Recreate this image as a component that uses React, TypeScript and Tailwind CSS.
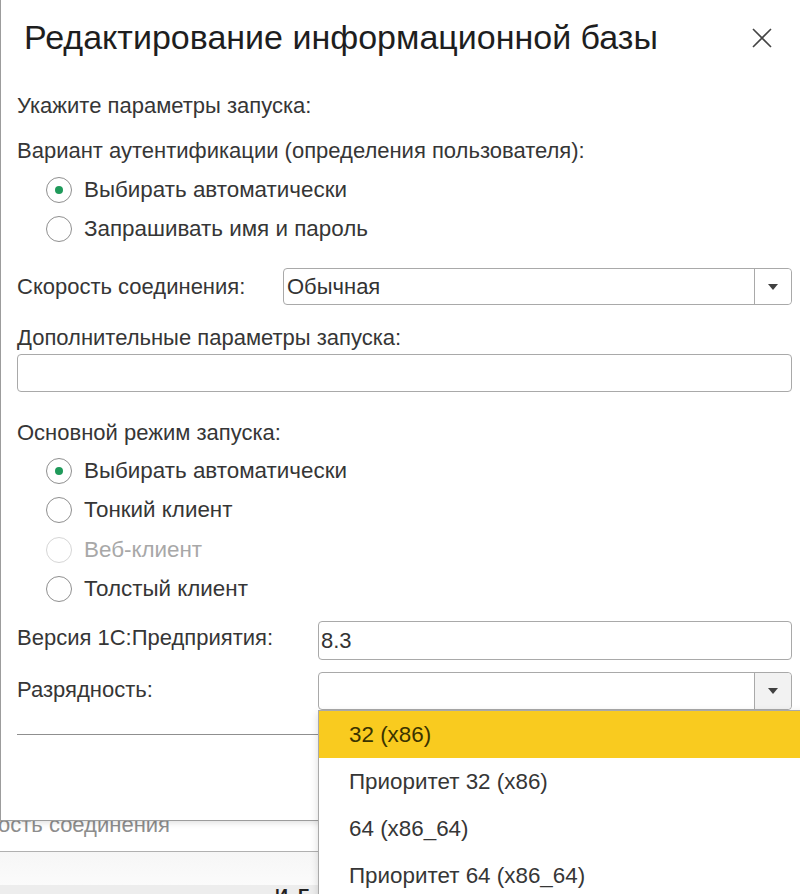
import React from "react";

const font = { fontFamily: '"Liberation Sans", Arial, sans-serif' };

function Radio({ label, checked = false, disabled = false }: { label: string; checked?: boolean; disabled?: boolean }) {
  return (
    <div className="flex h-[39.5px] items-center pl-[29px]">
      <div
        className={
          "flex h-[26px] w-[26px] items-center justify-center rounded-full border " +
          (disabled ? "border-[#d6d6d6]" : "border-[#8f8f8f]")
        }
      >
        {checked && <div className="h-[8px] w-[8px] rounded-full bg-[#1f9a5a]" />}
      </div>
      <span className={"ml-[12px] text-[22.4px] " + (disabled ? "text-[#a8a8a8]" : "text-[#363636]")}>{label}</span>
    </div>
  );
}

function Arrow() {
  return (
    <svg width="10" height="6" viewBox="0 0 10 6">
      <path d="M0 0 L10 0 L5 6 Z" fill="#404040" />
    </svg>
  );
}

function SelectBox({ value, hover = false, h }: { value: string; hover?: boolean; h: string }) {
  return (
    <div className={"flex flex-1 items-stretch rounded-[4px] border border-[#a9a9a9] bg-white " + h}>
      <div className="flex flex-1 items-center pl-[3px] text-[22px] text-[#333]">{value}</div>
      <div
        className={
          "flex w-[37px] items-center justify-center border-l border-[#a9a9a9] rounded-r-[4px] " +
          (hover ? "bg-[#f2f2f2]" : "bg-white")
        }
      >
        <Arrow />
      </div>
    </div>
  );
}

export default function App() {
  return (
    <div className="relative h-[894px] w-[800px] overflow-hidden bg-white" style={font}>
      {/* Dialog */}
      <div className="relative z-10 flex h-[821px] w-[800px] flex-col border-b border-l border-[#9c9c9c] bg-white pr-[8px] shadow-[0_2px_6px_rgba(0,0,0,0.12)]">
        <div className="flex h-[75px] items-center justify-between pl-[23px] pr-[14px]">
          <span className="text-[34px] text-[#1e1e1e]">Редактирование информационной базы</span>
          <svg width="22" height="22" viewBox="0 0 22 22" className="mr-[5px]">
            <path d="M2 2 L20 20 M20 2 L2 20" stroke="#444" strokeWidth="1.6" />
          </svg>
        </div>

        <div className="flex flex-col pl-[16px] text-[22px] text-[#363636]">
          <div className="mt-[10px] flex h-[40px] items-center">Укажите параметры запуска:</div>
          <div className="mt-[5px] flex h-[40px] items-center">Вариант аутентификации (определения пользователя):</div>
          <Radio label="Выбирать автоматически" checked />
          <Radio label="Запрашивать имя и пароль" />

          <div className="mt-[19px] flex items-center">
            <span className="w-[266px]">Скорость соединения:</span>
            <SelectBox value="Обычная" h="h-[37px]" />
          </div>

          <div className="mt-[19px] flex h-[26px] items-center">Дополнительные параметры запуска:</div>
          <div className="mt-[4px] h-[38px] rounded-[4px] border border-[#a9a9a9] bg-white" />

          <div className="mt-[27px] flex h-[26px] items-center">Основной режим запуска:</div>
          <div className="mt-[6px] flex flex-col">
            <Radio label="Выбирать автоматически" checked />
            <Radio label="Тонкий клиент" />
            <Radio label="Веб-клиент" disabled />
            <Radio label="Толстый клиент" />
          </div>

          <div className="mt-[12px] flex items-center">
            <span className="w-[301px] -mt-[6px]">Версия 1С:Предприятия:</span>
            <div className="flex h-[39px] flex-1 items-center rounded-[4px] border border-[#a9a9a9] bg-white pl-[2px] text-[#333]">
              8.3
            </div>
          </div>

          <div className="mt-[12px] flex items-center">
            <span className="w-[301px] -mt-[4px]">Разрядность:</span>
            <SelectBox value="" hover h="h-[38px]" />
          </div>

          <div className="mt-[24px] h-px bg-[#8f8f8f]" />
        </div>
      </div>

      {/* Background page below the dialog */}
      <div className="flex flex-col">
        <div className="h-[30px] overflow-hidden">
          <div className="-mt-[13px] -ml-[2px] text-[22px] text-[#8d8d8d]">ость соединения</div>
        </div>
        <div className="h-px bg-[#b0b0b0]" />
        <div className="h-[33px] bg-gradient-to-b from-[#f6f6f6] to-[#fbfbfb]" />
        <div className="flex h-[12px] items-start overflow-hidden bg-[#ededed] pl-[275px]">
          <span className="text-[18px] font-bold leading-[22px] text-[#222]">И. Б</span>
        </div>
      </div>

      {/* Dropdown list (overlay) */}
      <div className="absolute left-[318px] top-[710px] z-20 h-[200px] w-[500px] border-l border-t border-[#a9a9a9] bg-white text-[22.4px] text-[#363636] shadow-[0_3px_8px_rgba(0,0,0,0.15)]">
        <div className="flex h-[47px] items-center bg-[#f9cb1f] pl-[30px] text-[#3a3300]">32 (x86)</div>
        <div className="flex h-[47px] items-center pl-[30px]">Приоритет 32 (x86)</div>
        <div className="flex h-[47px] items-center pl-[30px]">64 (x86_64)</div>
        <div className="flex h-[47px] items-center pl-[30px]">Приоритет 64 (x86_64)</div>
      </div>
    </div>
  );
}
